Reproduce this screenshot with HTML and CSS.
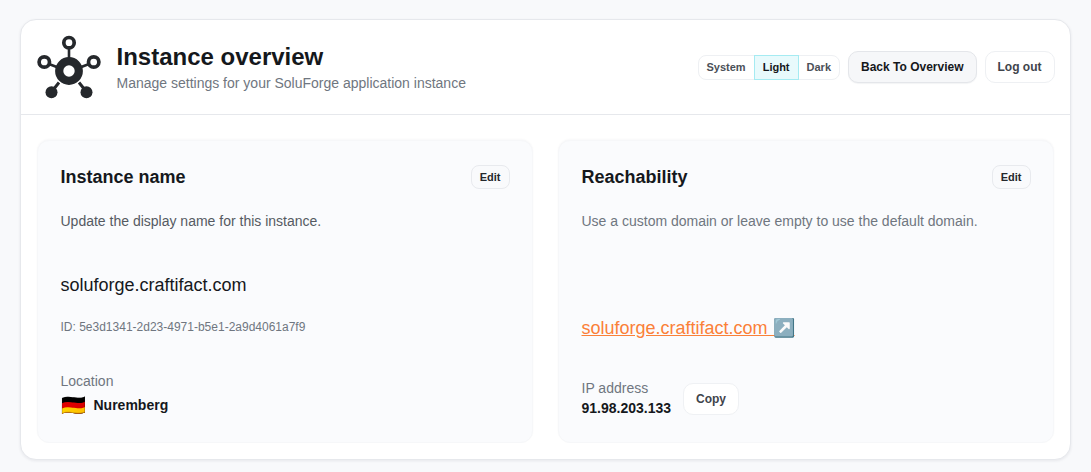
FILE: index.html
```html
<!DOCTYPE html>
<html lang="en">
<head>
<meta charset="utf-8">
<title>Instance overview</title>
<link rel="stylesheet" href="styles.css">
</head>
<body>
<main class="shell">
  <header class="top">
    <div class="brand">
      <svg class="logo" viewBox="0 0 66 66" aria-hidden="true">
        <g fill="none" stroke="#25282c">
          <circle cx="32" cy="36" r="9.800" stroke-width="8.200"/>
          <circle cx="32" cy="7.700" r="5.200" stroke-width="3.700"/>
          <circle cx="7.300" cy="27" r="5.200" stroke-width="3.700"/>
          <circle cx="56.700" cy="27" r="5.200" stroke-width="3.700"/>
          <path d="M32 13v10M12 29l9 3.500M52 29l-9 3.500" stroke-width="2.600"/>
          <path d="M16 55l6-7.500M48 55l-6-7.500" stroke-width="3"/>
        </g>
        <circle cx="14.500" cy="57.300" r="6" fill="#25282c"/>
        <circle cx="49.500" cy="57.300" r="6" fill="#25282c"/>
      </svg>
      <div class="heading">
        <h1 class="title">Instance overview</h1>
        <p class="subtitle">Manage settings for your SoluForge application instance</p>
      </div>
    </div>
    <div class="actions">
      <div class="theme">
        <span class="theme-item">System</span>
        <span class="theme-item is-active">Light</span>
        <span class="theme-item">Dark</span>
      </div>
      <button class="btn btn-back">Back To Overview</button>
      <button class="btn btn-plain">Log out</button>
    </div>
  </header>
  <section class="panels">
    <article class="panel">
      <div class="panel-head">
        <h2 class="panel-title">Instance name</h2>
        <button class="edit">Edit</button>
      </div>
      <p class="desc desc-dark">Update the display name for this instance.</p>
      <p class="domain">soluforge.craftifact.com</p>
      <p class="uuid">ID: 5e3d1341-2d23-4971-b5e1-2a9d4061a7f9</p>
      <div class="location">
        <div class="label">Location</div>
        <div class="place"><span class="flag">🇩🇪</span><strong>Nuremberg</strong></div>
      </div>
    </article>
    <article class="panel">
      <div class="panel-head">
        <h2 class="panel-title">Reachability</h2>
        <button class="edit">Edit</button>
      </div>
      <p class="desc">Use a custom domain or leave empty to use the default domain.</p>
      <a class="link" href="#">soluforge.craftifact.com ↗️</a>
      <div class="ip">
        <div>
          <div class="label">IP address</div>
          <strong class="ip-value">91.98.203.133</strong>
        </div>
        <button class="btn-copy">Copy</button>
      </div>
    </article>
  </section>
</main>
</body>
</html>
```

FILE: styles.css
```css
* { box-sizing: border-box; }
html, body { height: 100%; }
body {
  margin: 0;
  padding: 19px 20px 12px;
  background: #f8f9fb;
  color: #15181c;
  font-family: "Liberation Sans", Arial, sans-serif;
  overflow: hidden;
}
h1, h2, p { margin: 0; }
button { font-family: inherit; cursor: pointer; }

.shell {
  width: 1051px;
  height: 441px;
  background: #fff;
  border: 1px solid #e6e8ec;
  border-radius: 16px;
  box-shadow: 0 1px 3px rgba(20, 30, 50, 0.08);
}
.top {
  height: 95px;
  padding: 0 15.500px 0 16px;
  display: flex;
  align-items: center;
  justify-content: space-between;
  border-bottom: 1px solid #e6e8ec;
}
.brand { display: flex; align-items: center; gap: 13.500px; }
.logo { width: 66px; height: 66px; display: block; margin-top: 2px; }
.heading { padding-top: 2px; }
.title { font-size: 24px; line-height: 28px; font-weight: 700; color: #15181c; }
.subtitle { font-size: 14px; line-height: 20px; color: #6f7680; margin-top: 2px; }

.actions { display: flex; align-items: center; gap: 8px; }
.theme {
  display: flex;
  height: 25px;
  background: #fff;
  border: 1px solid #eef0f3;
  border-radius: 8px;
}
.theme-item {
  display: flex;
  align-items: center;
  padding: 0 8px;
  font-size: 11px;
  font-weight: 700;
  color: #4b5058;
}
.theme-item.is-active {
  margin: -1px 0;
  color: #15181c;
  background: #e8fafc;
  border: 1px solid #a5ebf2;
}
.btn {
  height: 32px;
  border-radius: 10px;
  font-size: 12px;
  font-weight: 700;
  padding: 0 12px;
}
.btn-back {
  background: #f6f7f9;
  border: 1px solid #e4e6ea;
  color: #15181c;
  box-shadow: 0 1px 1px rgba(20, 30, 50, 0.05);
}
.btn-plain {
  background: #fff;
  border: 1px solid #eef0f3;
  color: #3f444c;
}

.panels {
  display: grid;
  grid-template-columns: 496px 496px;
  gap: 25px;
  padding: 25px 0 0 16px;
}
.panel {
  height: 303px;
  padding: 24px 22px 0 22.500px;
  background: #fafbfd;
  border: 1px solid #f6f7f9;
  border-radius: 12px;
  box-shadow: 0 -1px 2px rgba(20, 30, 50, 0.03);
  display: flex;
  flex-direction: column;
}
.panel-head {
  display: flex;
  align-items: center;
  justify-content: space-between;
  height: 24px;
}
.panel-title { font-size: 18px; line-height: 24px; font-weight: 700; color: #15181c; }
.edit {
  height: 24px;
  padding: 0 8.500px 0 8px;
  background: #f9fafc;
  border: 1px solid #e8eaee;
  border-radius: 8px;
  font-size: 11px;
  font-weight: 700;
  color: #25282c;
}
.desc { margin-top: 22px; font-size: 14px; line-height: 20px; color: #6f7680; }
.desc-dark { color: #555a62; }
.domain { margin-top: 42px; font-size: 18px; line-height: 24px; color: #15181c; }
.uuid { margin-top: 22px; font-size: 12px; line-height: 16px; color: #6f7680; }
.location { margin-top: 37px; }
.label { font-size: 14px; line-height: 18px; color: #6f7680; }
.place { display: flex; align-items: center; margin-top: 5px; font-size: 14px; line-height: 20px; }
.flag { width: 33px; font-size: 20px; line-height: 20px; }
.link {
  margin-top: 85px;
  font-size: 18px;
  line-height: 24px;
  color: #fa8038;
  align-self: flex-start;
}
.ip { display: flex; align-items: center; gap: 12px; margin-top: 39px; }
.ip-value { display: block; font-size: 14px; line-height: 20px; margin-top: 1px; }
.btn-copy {
  height: 32px;
  padding: 0 12px;
  background: #fff;
  border: 1px solid #eff1f4;
  border-radius: 10px;
  font-size: 12px;
  font-weight: 700;
  color: #3f444c;
}
```
